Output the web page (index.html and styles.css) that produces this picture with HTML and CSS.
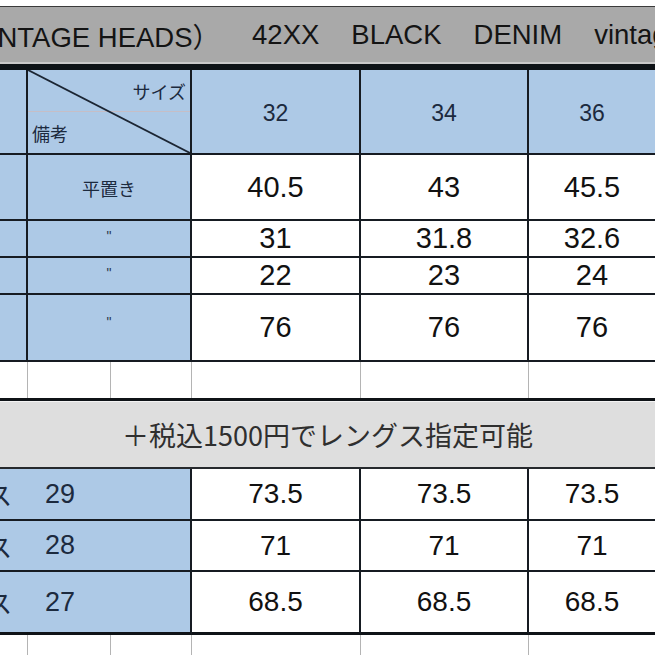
FILE: index.html
```html
<!DOCTYPE html>
<html lang="ja">
<head>
<meta charset="utf-8">
<title>VINTAGE HEADS 42XX BLACK DENIM</title>
<link rel="stylesheet" href="styles.css">
</head>
<body>
<div class="sheet">
  <div class="title">
    <span class="t first">（VINTAGE HEADS）</span>
    <span class="t">42XX</span>
    <span class="t">BLACK</span>
    <span class="t">DENIM</span>
    <span class="t">vintage</span>
  </div>

  <div class="upper">
    <div class="c blue"></div>
    <div class="c blue diag">
      <svg class="slash" viewBox="0 0 100 100" preserveAspectRatio="none" aria-hidden="true">
        <line x1="0" y1="0" x2="100" y2="100" stroke="#1b2533" stroke-width="1.8" vector-effect="non-scaling-stroke"/>
      </svg>
      <div class="dtop">サイズ</div>
      <div class="dbot">備考</div>
    </div>
    <div class="c blue hnum">32</div>
    <div class="c blue hnum">34</div>
    <div class="c blue hnum end">36</div>

    <div class="c blue"></div>
    <div class="c blue note">平置き</div>
    <div class="c val">40.5</div>
    <div class="c val">43</div>
    <div class="c val end">45.5</div>

    <div class="c blue"></div>
    <div class="c blue ditto">"</div>
    <div class="c val">31</div>
    <div class="c val">31.8</div>
    <div class="c val end">32.6</div>

    <div class="c blue"></div>
    <div class="c blue ditto">"</div>
    <div class="c val">22</div>
    <div class="c val">23</div>
    <div class="c val end">24</div>

    <div class="c blue"></div>
    <div class="c blue ditto tall">"</div>
    <div class="c val">76</div>
    <div class="c val">76</div>
    <div class="c val end">76</div>
  </div>

  <div class="empty thick">
    <div class="e"></div><div class="e"></div><div class="e"></div><div class="e"></div><div class="e"></div><div class="e end"></div>
  </div>

  <div class="band">＋税込1500円でレングス指定可能</div>

  <div class="lower">
    <div class="c blue len"><span class="k">レングス</span><span class="n">29</span></div>
    <div class="c val sm">73.5</div>
    <div class="c val sm">73.5</div>
    <div class="c val sm end">73.5</div>

    <div class="c blue len"><span class="k">レングス</span><span class="n">28</span></div>
    <div class="c val sm">71</div>
    <div class="c val sm">71</div>
    <div class="c val sm end">71</div>

    <div class="c blue len lastrow"><span class="k">レングス</span><span class="n">27</span></div>
    <div class="c val sm lastrow">68.5</div>
    <div class="c val sm lastrow">68.5</div>
    <div class="c val sm end lastrow">68.5</div>
  </div>

  <div class="empty tail">
    <div class="e"></div><div class="e"></div><div class="e"></div><div class="e"></div><div class="e"></div><div class="e end"></div>
  </div>
</div>
</body>
</html>
```

FILE: styles.css
```css
* { box-sizing: border-box; }

html, body {
  margin: 0;
  padding: 0;
  background: #ffffff;
}

body {
  width: 655px;
  height: 655px;
  overflow: hidden;
  font-family: "Liberation Sans", "Noto Sans CJK JP", sans-serif;
  color: #111;
}

.sheet {
  width: 655px;
  padding-top: 6px;
}

/* title bar */
.title {
  height: 64px;
  background: #a9a9a9;
  border-top: 1px solid #3a3a3a;
  border-bottom: 6px solid #0e1317;
  box-shadow: inset 0 -2px 0 #c9c9c9;
  display: flex;
  align-items: center;
  gap: 32px;
  white-space: nowrap;
  overflow: hidden;
  font-size: 27.5px;
  color: #141414;
  padding-bottom: 1px;
}

.title .first {
  margin-left: -56px;
}

/* upper table */
.upper {
  display: grid;
  grid-template-columns: 28px 164px 169px 168px 126px;
  grid-template-rows: 85px 66px 37px 37px 67px;
}

.c {
  border-right: 2px solid #161b22;
  border-bottom: 2px solid #161b22;
  display: flex;
  align-items: center;
  justify-content: center;
  white-space: nowrap;
}

.c.end { border-right: none; }

.blue {
  background: #adc9e6;
  color: #1c2a3e;
}

.diag {
  position: relative;
  flex-direction: column;
  align-items: stretch;
  justify-content: flex-start;
}

.slash {
  position: absolute;
  left: 0;
  top: 0;
  width: 100%;
  height: 100%;
  pointer-events: none;
}

.dtop {
  height: 42px;
  border-bottom: 1px solid #c6bec6;
  display: flex;
  align-items: center;
  justify-content: flex-end;
  padding-right: 4px;
  font-size: 18px;
}

.dbot {
  flex: 1;
  display: flex;
  align-items: center;
  padding-left: 4px;
  font-size: 18px;
}

.hnum {
  font-size: 23px;
  padding-top: 4px;
}

.note {
  font-size: 18px;
  padding-top: 2px;
}

.ditto {
  font-size: 14px;
  color: #2a3850;
  align-items: flex-start;
  padding-top: 7px;
}

.ditto.tall { padding-top: 19px; }

.val {
  background: #ffffff;
  font-size: 29px;
  color: #111;
}

.val.sm { font-size: 28px; }

/* empty rows */
.empty {
  display: grid;
  grid-template-columns: 28px 83px 81px 169px 168px 126px;
  background: #fff;
}

.empty.thick {
  height: 39px;
  border-bottom: 3px solid #0f1317;
}

.empty.tail {
  height: 20px;
}

.e {
  border-right: 1px solid #b4b4b4;
}

.e.end { border-right: none; }

/* band */
.band {
  height: 68px;
  background: #dedede;
  border-bottom: 2px solid #26292d;
  display: flex;
  align-items: center;
  justify-content: center;
  font-size: 27px;
  color: #2f2f2f;
  box-shadow: inset 0 1px 0 #f3f3f3;
  font-family: "Noto Sans CJK JP", sans-serif;
}

/* lower table */
.lower {
  display: grid;
  grid-template-columns: 192px 169px 168px 126px;
  grid-template-rows: 52px 51px 63px;
}

.len {
  justify-content: flex-start;
  font-size: 25px;
  overflow: hidden;
}

.len .k {
  margin-left: -88px;
}

.len .n {
  margin-left: 33px;
  font-size: 27px;
}

.lastrow {
  border-bottom: 3px solid #0f1317;
}
```
